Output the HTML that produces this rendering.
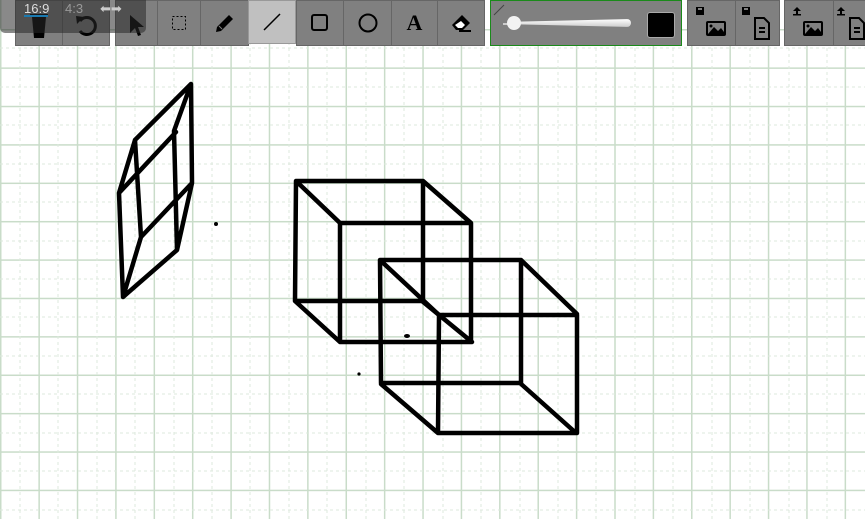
<!DOCTYPE html>
<html><head><style>
body{margin:0;width:865px;height:519px;overflow:hidden;position:relative;font-family:"Liberation Sans",sans-serif;
background-color:#fff;
background-image:
linear-gradient(to right,#c9dcc9 1.3px,transparent 1.3px),
linear-gradient(to bottom,#c9dcc9 1.3px,transparent 1.3px);
background-size:38.4px 38.4px,38.4px 38.4px;
background-position:0px 0,0 29px;}
.btn{position:absolute;top:0;height:46px;background:#808080;border:1px solid #666;box-sizing:border-box;display:flex;align-items:center;justify-content:center}
</style></head><body>
<svg style="position:absolute;left:0;top:0" width="865" height="519">
<g stroke="#dde9dd" stroke-dasharray="3 3" stroke-width="1">
<line x1="20" y1="0" x2="20" y2="519"/><line x1="58" y1="0" x2="58" y2="519"/><line x1="97" y1="0" x2="97" y2="519"/><line x1="135" y1="0" x2="135" y2="519"/><line x1="174" y1="0" x2="174" y2="519"/><line x1="212" y1="0" x2="212" y2="519"/><line x1="250" y1="0" x2="250" y2="519"/><line x1="289" y1="0" x2="289" y2="519"/><line x1="327" y1="0" x2="327" y2="519"/><line x1="366" y1="0" x2="366" y2="519"/><line x1="404" y1="0" x2="404" y2="519"/><line x1="443" y1="0" x2="443" y2="519"/><line x1="481" y1="0" x2="481" y2="519"/><line x1="520" y1="0" x2="520" y2="519"/><line x1="558" y1="0" x2="558" y2="519"/><line x1="596" y1="0" x2="596" y2="519"/><line x1="635" y1="0" x2="635" y2="519"/><line x1="673" y1="0" x2="673" y2="519"/><line x1="712" y1="0" x2="712" y2="519"/><line x1="750" y1="0" x2="750" y2="519"/><line x1="789" y1="0" x2="789" y2="519"/><line x1="827" y1="0" x2="827" y2="519"/>
<line y1="48" x1="0" y2="48" x2="865"/><line y1="87" x1="0" y2="87" x2="865"/><line y1="125" x1="0" y2="125" x2="865"/><line y1="164" x1="0" y2="164" x2="865"/><line y1="202" x1="0" y2="202" x2="865"/><line y1="241" x1="0" y2="241" x2="865"/><line y1="279" x1="0" y2="279" x2="865"/><line y1="317" x1="0" y2="317" x2="865"/><line y1="356" x1="0" y2="356" x2="865"/><line y1="394" x1="0" y2="394" x2="865"/><line y1="433" x1="0" y2="433" x2="865"/><line y1="471" x1="0" y2="471" x2="865"/><line y1="510" x1="0" y2="510" x2="865"/>
</g>
<g stroke="#000" stroke-width="4.5" fill="none" stroke-linecap="round" stroke-linejoin="round">
<path d="M191 84L135 140L119 193L123 297L177 250L192 183L191 84L174 131L177 250M135 140L141 237L192 183M119 193L176 132M141 237L123 297"/>
<path d="M296 181H423V301H295ZM340 223H471V342H340ZM296 181L340 223M423 181L471 223M295 301L340 342M422 301L472 342"/>
<path d="M380 260H521V383H381ZM439 315H577V433H438ZM380 260L439 315M521 260L577 314M381 384L438 433M520 383L576 433"/>
</g>
<circle cx="216" cy="224" r="2"/><circle cx="359" cy="374" r="1.6"/><ellipse cx="407" cy="336" rx="3" ry="2"/>
</svg>

<div class="btn" style="left:15px;width:48px"><svg width="22" height="26" style="margin-top:6px"><path d="M4 4H18L16 25H6Z" fill="#000"/><rect x="2" y="1" width="18" height="3" fill="#000"/></svg></div>
<div class="btn" style="left:62px;width:48px"><svg width="24" height="24" style="margin-top:6px"><path d="M6 7A8.5 8.5 0 1 1 6 17" stroke="#000" stroke-width="3" fill="none"/><path d="M2 2L10 3L3 10Z" fill="#000"/></svg></div>
<div class="btn" style="left:115px;width:43px"><svg width="18" height="24" style="margin-top:6px"><path d="M2 1L2 19L7 14L10 22L13 21L10 13L16 13Z" fill="#000"/></svg></div>
<div class="btn" style="left:157px;width:44px"><svg width="16" height="16"><rect x="1.5" y="1.5" width="13" height="13" stroke="#000" stroke-dasharray="2 2" fill="none"/></svg></div>
<div class="btn" style="left:200px;width:49px"><svg width="22" height="22"><path d="M2 20L3 15L15 3L19 7L7 19Z" fill="#000"/><path d="M5 14L8 17" stroke="#808080"/></svg></div>
<div class="btn" style="left:248px;width:48px;background:#c0c0c0;height:44px;border-color:#999"><svg width="22" height="22"><line x1="3" y1="19" x2="19" y2="3" stroke="#000" stroke-width="1.5"/></svg></div>
<div class="btn" style="left:296px;width:48px"><svg width="20" height="20"><rect x="2" y="2" width="15" height="15" rx="2" stroke="#000" stroke-width="2" fill="none"/></svg></div>
<div class="btn" style="left:343px;width:49px"><svg width="22" height="22"><circle cx="11" cy="11" r="8.5" stroke="#000" stroke-width="2" fill="none"/></svg></div>
<div class="btn" style="left:391px;width:47px;font:bold 22px 'Liberation Serif',serif">A</div>
<div class="btn" style="left:437px;width:48px"><svg width="22" height="22"><path d="M2 13L12 3L20 11L13 18H6Z" fill="#000"/><path d="M5 13L8 16H12L15 13L11 9Z" fill="#fff"/><line x1="9" y1="19" x2="21" y2="19" stroke="#000" stroke-width="2"/></svg></div>

<div style="position:absolute;left:490px;top:0;width:192px;height:46px;background:#808080;border:1px solid #1a8a1a;box-sizing:border-box">
<svg style="position:absolute;left:2px;top:3px" width="14" height="12"><line x1="1" y1="11" x2="11" y2="1" stroke="#444"/></svg>
<div style="position:absolute;left:12px;top:22px;width:10px;height:2px;background:#ccc"></div>
<div style="position:absolute;left:22px;top:18px;width:118px;height:8px;background:linear-gradient(#fff,#ccc);border-radius:4px;clip-path:polygon(0 35%,100% 0,100% 100%,0 65%)"></div>
<div style="position:absolute;left:16px;top:15px;width:14px;height:14px;border-radius:50%;background:#f2f2f2"></div>
<div style="position:absolute;left:156px;top:11px;width:26px;height:24px;background:#000;border:1px solid #aaa;border-radius:3px"></div>
</div>

<div class="btn" style="left:687px;width:49px"><svg width="34" height="34"><rect x="1" y="1" width="8" height="8" fill="#000"/><rect x="3" y="2" width="4" height="2" fill="#808080"/><rect x="11" y="15" width="20" height="15" rx="2" fill="#000"/><rect x="13" y="17" width="16" height="11" fill="#808080"/><path d="M13 28L19 21L23 25L26 22L29 26V28Z" fill="#000"/><circle cx="16" cy="20" r="1.5" fill="#000"/></svg></div>
<div class="btn" style="left:735px;width:45px"><svg width="34" height="34"><rect x="1" y="1" width="8" height="8" fill="#000"/><rect x="3" y="2" width="4" height="2" fill="#808080"/><path d="M14 12H23L28 17V33H14Z" stroke="#000" stroke-width="2" fill="none"/><path d="M18 22H24M18 26H24" stroke="#000" stroke-width="2"/></svg></div>
<div class="btn" style="left:784px;width:50px"><svg width="34" height="34"><path d="M5 1L9 5H6V8H4V5H1Z" fill="#000"/><rect x="1" y="8" width="8" height="1.5" fill="#000"/><rect x="11" y="15" width="20" height="15" rx="2" fill="#000"/><rect x="13" y="17" width="16" height="11" fill="#808080"/><path d="M13 28L19 21L23 25L26 22L29 26V28Z" fill="#000"/><circle cx="16" cy="20" r="1.5" fill="#000"/></svg></div>
<div class="btn" style="left:833px;width:40px"><svg width="34" height="34"><path d="M5 1L9 5H6V8H4V5H1Z" fill="#000"/><rect x="1" y="8" width="8" height="1.5" fill="#000"/><path d="M14 12H23L28 17V33H14Z" stroke="#000" stroke-width="2" fill="none"/><path d="M18 22H24M18 26H24" stroke="#000" stroke-width="2"/></svg></div>

<div style="position:absolute;left:0;top:0;width:146px;height:33px;background:rgba(40,40,40,.55);border-radius:0 0 5px 5px"></div>
<div style="position:absolute;left:24px;top:1px;color:#ddd;font-size:13px">16:9</div>
<div style="position:absolute;left:24px;top:15px;width:24px;height:2px;background:#1a7ab0"></div>
<div style="position:absolute;left:65px;top:1px;color:#999;font-size:13px">4:3</div>
<div style="position:absolute;left:100px;top:1px;color:#ccc;font-size:13px">⬅➡</div>
</body></html>
